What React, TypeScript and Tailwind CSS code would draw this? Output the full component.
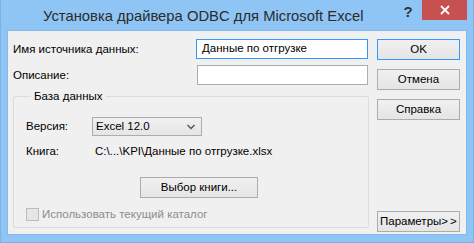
import React from "react";

const font = { fontFamily: '"Liberation Sans", Arial, sans-serif' };

function Btn({ label, primary, className = "" }: { label: React.ReactNode; primary?: boolean; className?: string }) {
  return (
    <button
      className={
        "h-[21px] w-[83px] text-[11.5px] text-black bg-gradient-to-b from-[#f0f0f0] to-[#e5e5e5] border leading-none whitespace-nowrap " +
        (primary ? "border-[#3399ff]" : "border-[#acacac]") +
        " " +
        className
      }
    >
      {label}
    </button>
  );
}

export default function App() {
  return (
    <div
      className="w-[474px] h-[243px] bg-[#8ec5f5] flex flex-col border-x border-b border-[#7ab3e6] overflow-hidden"
      style={font}
    >
      {/* title bar */}
      <div className="h-[30px] flex items-start shrink-0">
        <div className="flex-1 pt-[5px] pl-[42px] text-[14.8px] text-[#2b2b2b] whitespace-nowrap">
          Установка драйвера ODBC для Microsoft Excel
        </div>
        <div className="w-[28px] pt-[1px] text-[15px] font-bold text-[#333] text-center">?</div>
        <div className="w-[45px] h-[20px] bg-[#c75050] mr-[6px] flex items-center justify-center text-white">
          <svg width="10" height="10" viewBox="0 0 10 10">
            <path d="M1 1 L9 9 M9 1 L1 9" stroke="white" strokeWidth="1.8" />
          </svg>
        </div>
      </div>

      {/* client area */}
      <div className="mx-[6px] h-[205px] bg-[#f0f0f0] border border-[#83b9ec] flex text-[11.5px] text-black">
        <div className="w-[362px] pl-[5px] pt-[8px] flex flex-col">
          <div className="flex items-center h-[20px]">
            <span className="w-[183px] pt-[2px]">Имя источника данных:</span>
            <div className="w-[172px] h-[20px] bg-white border border-[#3399ff] flex items-center px-[5px]">
              Данные по отгрузке
            </div>
          </div>
          <div className="flex items-center h-[20px] mt-[6px]">
            <span className="w-[184px] pt-[2px]">Описание:</span>
            <div className="w-[171px] h-[20px] bg-white border border-[#abadb3]" />
          </div>

          <fieldset className="mt-[4px] w-[356px] h-[139px] border border-[#dcdcdc] rounded-[2px] pl-[12px]">
            <legend className="ml-[5px] px-[3px] leading-[14px]">База данных</legend>
            <div className="flex items-center mt-[14px]">
              <span className="w-[66px]">Версия:</span>
              <div className="w-[110px] h-[19px] border border-[#acacac] bg-gradient-to-b from-[#f0f0f0] to-[#e5e5e5] flex items-center pl-[3px] pr-[6px]">
                <span className="flex-1">Excel 12.0</span>
                <svg width="8" height="6" viewBox="0 0 8 6">
                  <path d="M0.5 1 L4 4.5 L7.5 1" stroke="#555" strokeWidth="1.5" fill="none" />
                </svg>
              </div>
            </div>
            <div className="flex items-center mt-[8px] h-[16px]">
              <span className="w-[69px]">Книга:</span>
              <span>C:\...\KPI\Данные по отгрузке.xlsx</span>
            </div>
            <div className="mt-[17px] pl-[114px]">
              <Btn label="Выбор книги..." className="!w-[118px]" />
            </div>
            <div className="flex items-center mt-[8px] text-[#8d8d8d]">
              <span className="w-[13px] h-[13px] border border-[#bcbcbc] bg-[#e6e6e6] mr-[3px]" />
              Использовать текущий каталог
            </div>
          </fieldset>
        </div>

        <div className="flex-1 pl-[7px] pt-[8px] flex flex-col">
          <Btn label="OK" primary />
          <Btn label="Отмена" className="mt-[9px]" />
          <Btn label="Справка" className="mt-[9px]" />
          <Btn
            label={<>Параметры<span className="tracking-[2px]">&gt;&gt;</span></>}
            className="mt-auto mb-[2px] text-left pl-[2px]"
          />
        </div>
      </div>
    </div>
  );
}
